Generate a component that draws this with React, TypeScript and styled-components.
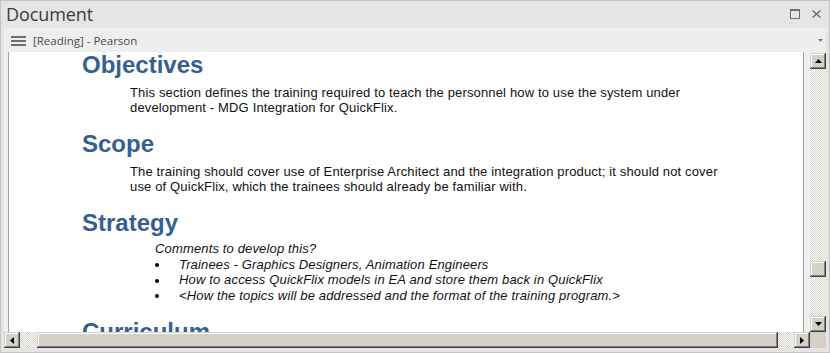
import styled, { createGlobalStyle } from "styled-components";

const GlobalStyle = createGlobalStyle`
  html, body {
    margin: 0;
    padding: 0;
    background: #ffffff;
  }
  body {
    width: 830px;
    height: 353px;
    overflow: hidden;
  }
`;

const sections = [
  {
    title: "Objectives",
    lines: [
      "This section defines the training required to teach the personnel how to use the system under development - MDG Integration for QuickFlix.",
    ],
  },
  {
    title: "Scope",
    lines: [
      "The training should cover use of Enterprise Architect and the integration product; it should not cover use of QuickFlix, which the trainees should already be familiar with.",
    ],
  },
];

const strategyBullets = [
  "Trainees - Graphics Designers, Animation Engineers",
  "How to access QuickFlix models in EA and store them back in QuickFlix",
  "<How the topics will be addressed and the format of the training program.>",
];

const UpArrow = () => (
  <svg width="7" height="4" viewBox="0 0 7 4">
    <polygon points="3.5,0 7,4 0,4" fill="#000" />
  </svg>
);

const DownArrow = () => (
  <svg width="7" height="4" viewBox="0 0 7 4">
    <polygon points="0,0 7,0 3.5,4" fill="#000" />
  </svg>
);

const LeftArrow = () => (
  <svg width="4" height="7" viewBox="0 0 4 7">
    <polygon points="4,0 4,7 0,3.5" fill="#000" />
  </svg>
);

const RightArrow = () => (
  <svg width="4" height="7" viewBox="0 0 4 7">
    <polygon points="0,0 4,3.5 0,7" fill="#000" />
  </svg>
);

const App = () => {
  return (
    <>
      <GlobalStyle />
      <Window>
        <TitleBar>
          <Title>Document</Title>
          <TitleIcons>
            <svg width="10" height="10" viewBox="0 0 10 10">
              <rect x="0.5" y="0.5" width="9" height="9" fill="none" stroke="#6e6e6e" />
              <rect x="0" y="0" width="10" height="2" fill="#6e6e6e" />
            </svg>
            <svg width="9" height="8" viewBox="0 0 9 8">
              <path d="M0.5 0.5 L8.5 7.5 M8.5 0.5 L0.5 7.5" stroke="#6e6e6e" strokeWidth="1.4" />
            </svg>
          </TitleIcons>
        </TitleBar>

        <Panel>
          <Toolbar>
            <Hamburger>
              <Bar />
              <Bar />
              <Bar />
            </Hamburger>
            <ViewName>[Reading] - Pearson</ViewName>
            <svg width="5" height="3" viewBox="0 0 5 3">
              <polygon points="0,0 5,0 2.5,3" fill="#7a7a7a" />
            </svg>
          </Toolbar>

          <Body>
            <DocFrame>
              <Doc>
                {sections.map((section) => (
                  <Section key={section.title}>
                    <Heading>{section.title}</Heading>
                    {section.lines.map((line) => (
                      <Paragraph key={line}>{line}</Paragraph>
                    ))}
                  </Section>
                ))}
                <Section>
                  <Heading $tight>Strategy</Heading>
                  <Notes>
                    <Note>Comments to develop this?</Note>
                    {strategyBullets.map((item) => (
                      <BulletItem key={item}>
                        <Dot />
                        <span>{item}</span>
                      </BulletItem>
                    ))}
                  </Notes>
                </Section>
                <Section>
                  <Heading>Curriculum</Heading>
                </Section>
              </Doc>
            </DocFrame>

            <VScroll>
              <ScrollButton>
                <UpArrow />
              </ScrollButton>
              <VTrack>
                <VThumb $offset={192} />
              </VTrack>
              <ScrollButton>
                <DownArrow />
              </ScrollButton>
            </VScroll>

            <HScroll>
              <ScrollButton>
                <LeftArrow />
              </ScrollButton>
              <HTrack>
                <HThumb $offset={17} $size={741} />
              </HTrack>
              <ScrollButton>
                <RightArrow />
              </ScrollButton>
            </HScroll>

            <Corner />
          </Body>
        </Panel>
      </Window>
    </>
  );
};
export default App;

const Window = styled.div`
  width: 830px;
  height: 353px;
  box-sizing: border-box;
  border: 1px solid #c4c4c4;
  background: #e5e5e5;
  display: flex;
  flex-direction: column;
`;

const TitleBar = styled.div`
  height: 27px;
  flex: none;
  display: flex;
  align-items: center;
  justify-content: space-between;
  padding: 0 8px 0 5px;
`;

const Title = styled.div`
  font-family: "Open Sans", "Noto Sans", sans-serif;
  font-size: 18px;
  color: #3c3c3c;
  letter-spacing: -0.1px;
  line-height: 27px;
`;

const TitleIcons = styled.div`
  display: flex;
  align-items: center;
  gap: 12px;
  margin-top: -1px;
`;

const Panel = styled.div`
  flex: 1;
  margin: 0 3px 4px 3px;
  background: #f0f0f0;
  display: flex;
  flex-direction: column;
  min-height: 0;
`;

const Toolbar = styled.div`
  height: 24px;
  flex: none;
  display: flex;
  align-items: center;
  padding: 0 3px 0 7px;
  background: #eeeeee;
`;

const Hamburger = styled.div`
  display: flex;
  flex-direction: column;
  gap: 2px;
  width: 15px;
  margin-top: 1px;
`;

const Bar = styled.div`
  height: 2px;
  background: #6d6d6d;
`;

const ViewName = styled.div`
  flex: 1;
  margin-left: 7px;
  font-family: "Open Sans", "Noto Sans", sans-serif;
  font-size: 11.5px;
  color: #4a4a4a;
  margin-top: 1px;
`;

const Body = styled.div`
  flex: 1;
  min-height: 0;
  display: grid;
  grid-template-columns: 1fr 16px;
  grid-template-rows: 1fr 16px;
`;

const DocFrame = styled.div`
  padding: 0 6px 0 4px;
  min-height: 0;
  display: flex;
`;

const Doc = styled.div`
  flex: 1;
  background: #ffffff;
  border-left: 1px solid #a0a0a0;
  border-right: 1px solid #a0a0a0;
  overflow: hidden;
  padding: 1px 0 0 73px;
  font-family: "Liberation Sans", Arial, sans-serif;
  color: #111111;
`;

const Section = styled.div`
  margin-bottom: 17px;
`;

const Heading = styled.h1<{ $tight?: boolean }>`
  margin: 0 0 ${(p) => (p.$tight ? "6px" : "8px")} 0;
  font-size: 24px;
  line-height: 24px;
  font-weight: 700;
  color: #365f91;
`;

const Paragraph = styled.p`
  margin: 0 0 0 48px;
  width: 610px;
  font-size: 13px;
  line-height: 15px;
  letter-spacing: 0.15px;
`;

const Notes = styled.div`
  margin-left: 73px;
  font-size: 13px;
  line-height: 15.5px;
  font-style: italic;
  letter-spacing: 0.15px;
`;

const Note = styled.div``;

const BulletItem = styled.div`
  display: flex;
  align-items: center;
`;

const Dot = styled.span`
  width: 4px;
  height: 4px;
  border-radius: 50%;
  background: #000;
  margin: 0 20px 0 0;
  flex: none;
  position: relative;
  top: 1px;
`;

const ScrollButton = styled.div`
  width: 16px;
  height: 16px;
  flex: none;
  box-sizing: border-box;
  background: #d4d0c8;
  box-shadow: inset -1px -1px #404040, inset 1px 1px #d4d0c8,
    inset -2px -2px #808080, inset 2px 2px #ffffff;
  display: flex;
  align-items: center;
  justify-content: center;
`;

const checker = `
  background-color: #ffffff;
  background-image: repeating-conic-gradient(#d4d0c8 0% 25%, #ffffff 0% 50%);
  background-size: 2px 2px;
`;

const VScroll = styled.div`
  display: flex;
  flex-direction: column;
  padding-top: 1px;
  min-height: 0;
`;

const VTrack = styled.div`
  flex: 1;
  ${checker}
  display: flex;
  flex-direction: column;
`;

const VThumb = styled(ScrollButton)<{ $offset: number }>`
  margin-top: ${(p) => p.$offset}px;
`;

const HScroll = styled.div`
  display: flex;
`;

const HTrack = styled.div`
  flex: 1;
  ${checker}
  display: flex;
`;

const HThumb = styled(ScrollButton)<{ $offset: number; $size: number }>`
  margin-left: ${(p) => p.$offset}px;
  width: ${(p) => p.$size}px;
`;

const Corner = styled.div`
  background: #d4d0c8;
`;
